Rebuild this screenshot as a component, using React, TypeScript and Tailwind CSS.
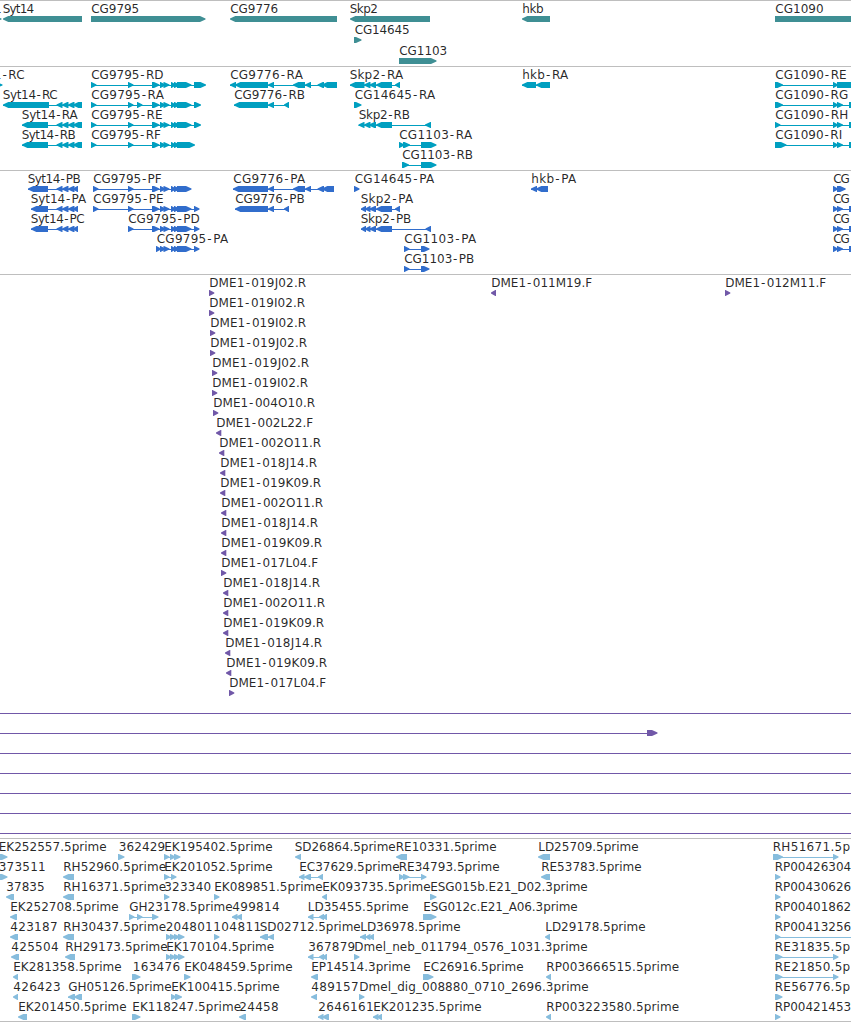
type Dir = "L" | "R" | "B";
type Seg = [number, number];
// row, label, label start, label end, strand, blocks
type Feature = [number, string, number, number, Dir, Seg[]];

const WIDTH = 851;

const s14: Seg[] = [[56.5, 62.5], [62, 68.5], [68, 74.5]];
const cgMid: Seg[] = [[152, 159.5], [160, 165.5], [163.5, 169.5], [171, 176], [174, 180]];
const q9776: Seg[] = [[268, 274], [293, 305], [305, 311], [317.5, 324]];
const four: Seg[] = [[166, 171.5], [170, 176], [174, 180], [178, 184.5]];

const genes: Feature[] = [
  [0, "CG1091", -46.5, 1.5, "R", [[-20, 1.5]]],
  [0, "Syt14", 2.5, 34, "L", [[3, 82]]],
  [0, "CG9795", 91, 139, "R", [[91, 205.5]]],
  [0, "CG9776", 230, 278, "L", [[230, 337]]],
  [0, "Skp2", 349.5, 377.7, "L", [[350, 430]]],
  [1, "CG14645", 354.5, 409.5, "R", [[354, 361.5]]],
  [2, "CG1103", 399, 447, "R", [[399, 436.5]]],
  [0, "hkb", 522, 543.5, "L", [[522, 550]]],
  [0, "CG1090", 775, 823.5, "B", [[775, 860]]],
];

const transcripts: Feature[] = [
  [0, "CG1091-RC", -48, 24.5, "R", [[-10, 2.5]]],
  [1, "Syt14-RC", 2.5, 57.5, "L", [[3, 49], ...s14, [73, 82]]],
  [2, "Syt14-RA", 21.5, 77.5, "L", [[22, 48], ...s14, [73, 82]]],
  [3, "Syt14-RB", 21.5, 75.5, "L", [[22, 48], ...s14, [73, 82]]],
  [0, "CG9795-RD", 91, 163.3, "R", [[91, 96.5], [128, 133.5], ...cgMid, [177, 191.5], [194, 206]]],
  [1, "CG9795-RA", 91, 163.7, "R", [[91, 96.5], [128, 133.5], [137, 142.5], ...cgMid, [177, 191.5], [194, 201]]],
  [2, "CG9795-RE", 91, 162.3, "R", [[91, 96.5], [128, 133.5], ...cgMid, [177, 191.5], [194, 201]]],
  [3, "CG9795-RF", 91, 160.7, "R", [[91, 96.5], [128, 133.5], ...cgMid, [177, 195]]],
  [0, "CG9776-RA", 230, 302.7, "L", [[230, 236], [235, 268], ...q9776, [322, 337]]],
  [1, "CG9776-RB", 234, 304.7, "L", [[234, 268], [268, 274], [284, 289]]],
  [0, "Skp2-RA", 349.5, 403, "L", [[350, 364.5], [364, 370.5], [369.5, 376], [376, 392], [395, 400]]],
  [1, "CG14645-RA", 354.5, 435, "R", [[354, 361.5]]],
  [2, "Skp2-RB", 358.5, 409.7, "L", [[358.5, 364.5], [364, 370.5], [369, 376], [376, 392], [425, 431]]],
  [3, "CG1103-RA", 399, 472, "R", [[399, 404.5], [403, 410], [421, 436.5]]],
  [4, "CG1103-RB", 402, 472.7, "R", [[402, 409], [421, 436.5]]],
  [0, "hkb-RA", 522, 568, "L", [[522, 536], [536, 550]]],
  [0, "CG1090-RE", 775, 846.5, "R", [[775, 783], [833, 838], [837, 860]]],
  [1, "CG1090-RG", 775, 848, "R", [[775, 783], [833, 838], [837, 843], [849, 858]]],
  [2, "CG1090-RH", 775, 848, "R", [[775, 780.5], [833, 838], [837, 843], [849, 858]]],
  [3, "CG1090-RI", 775, 842, "R", [[775, 786.5], [833, 838], [837, 843], [849, 858]]],
];

const proteins: Feature[] = [
  [0, "Syt14-PB", 27.5, 80.5, "L", [[28, 48], ...s14, [73, 78]]],
  [1, "Syt14-PA", 30.5, 86, "L", [[31, 48], ...s14, [73, 78]]],
  [2, "Syt14-PC", 30.5, 84.5, "L", [[31, 48], ...s14, [73, 78]]],
  [0, "CG9795-PF", 93, 161.5, "R", [[93, 98.5], [128, 133.5], ...cgMid, [177, 191.5]]],
  [1, "CG9795-PE", 93, 163.5, "R", [[93, 98.5], [128, 133.5], ...cgMid, [177, 191.5], [194, 199.5]]],
  [2, "CG9795-PD", 128, 199.5, "R", [[128, 133.5], ...cgMid, [177, 191.5], [194, 199.5]]],
  [3, "CG9795-PA", 156.5, 228, "R", [[156, 161], ...cgMid.slice(1), [177, 191.5], [194, 199.5]]],
  [0, "CG9776-PA", 233, 305, "L", [[233, 268], ...q9776, [322, 334]]],
  [1, "CG9776-PB", 235, 304.5, "L", [[235, 268], [268, 274], [284, 289]]],
  [0, "CG14645-PA", 354.5, 434, "R", [[354, 359.5]]],
  [1, "Skp2-PA", 360.5, 413, "L", [[361, 366], [365, 370.5], [369.5, 376], [376, 392], [395, 400]]],
  [2, "Skp2-PB", 360.5, 411, "L", [[361, 366], [365, 370.5], [369.5, 376], [376, 392], [425.5, 431]]],
  [3, "CG1103-PA", 404, 476, "R", [[404, 409.5], [421, 429.5]]],
  [4, "CG1103-PB", 404, 474, "R", [[404, 409.5], [421, 429.5]]],
  [0, "hkb-PA", 531, 576, "L", [[531, 537], [536, 548]]],
  [0, "CG", 833, 849.5, "R", [[833, 838], [837, 845.7]]],
  [1, "CG", 833, 849.5, "R", [[833, 838], [837, 843], [849, 858]]],
  [2, "CG", 833, 849.5, "R", [[833, 838], [837, 843], [849, 858]]],
  [3, "CG", 833, 849.5, "R", [[833, 838], [837, 843], [849, 858]]],
];

const cloneRows: [string, number, number, Dir][] = [
  ["019J02.R", 209, 306, "R"],
  ["019I02.R", 209, 305, "R"],
  ["019I02.R", 210, 306, "R"],
  ["019J02.R", 210, 307, "R"],
  ["019J02.R", 212, 309, "R"],
  ["019I02.R", 212, 308, "R"],
  ["004O10.R", 213, 315, "R"],
  ["002L22.F", 216, 313, "L"],
  ["002O11.R", 219, 321, "L"],
  ["018J14.R", 220, 317, "L"],
  ["019K09.R", 220, 321, "L"],
  ["002O11.R", 221, 323, "L"],
  ["018J14.R", 221, 318, "L"],
  ["019K09.R", 221, 322, "L"],
  ["017L04.F", 221, 318, "R"],
  ["018J14.R", 223, 320, "L"],
  ["002O11.R", 223, 325, "L"],
  ["019K09.R", 223, 324, "L"],
  ["018J14.R", 225, 322, "L"],
  ["019K09.R", 226, 327, "L"],
  ["017L04.F", 229, 326, "R"],
];

const clones: Feature[] = [
  ...cloneRows.map(([n, x, e, d], i): Feature => [i, "DME1-" + n, x, e, d, [[x, x + 5.3]]]),
  [0, "DME1-011M19.F", 491, 592, "L", [[491, 496]]],
  [0, "DME1-012M11.F", 725, 826, "R", [[725, 730.3]]],
  [21, "", 0, 0, "B", [[-9, -8], [860, 861]]],
  [22, "", 0, 0, "R", [[-9, -8], [647, 657.5]]],
  ...[23, 24, 25, 26, 27].map((r): Feature => [r, "", 0, 0, "B", [[-9, -8], [860, 861]]]),
];

const ests: Feature[] = [
  [0, "EK252557.5prime", -1.5, 106.5, "R", [[-3, 7.5]]],
  [0, "362429", 118.5, 165, "R", [[118, 124.5]]],
  [0, "EK195402.5prime", 164, 272.5, "R", [[164, 169.5], [170, 175.5], [174, 180.5]]],
  [0, "SD26864.5prime", 294.5, 395.5, "L", [[295, 301]]],
  [0, "RE10331.5prime", 395.5, 496.5, "L", [[396, 407]]],
  [0, "LD25709.5prime", 538, 638.5, "L", [[538, 550]]],
  [0, "RH51671.5p", 772.5, 850, "R", [[773, 783], [833, 838.5]]],
  [1, "373511", -1.5, 45.5, "R", [[-3, 7.5]]],
  [1, "RH52960.5prime", 63, 166, "L", [[63, 74]]],
  [1, "EK201052.5prime", 164, 272.5, "R", [[164, 169.5], [171, 176.5]]],
  [1, "EC37629.5prime", 299, 399.5, "L", [[299, 304.5], [304, 311], [318, 323]]],
  [1, "RE34793.5prime", 398.5, 499.5, "R", [[399, 404.5], [403, 409.5], [421, 426.5]]],
  [1, "RE53783.5prime", 541, 641.5, "L", [[541, 550]]],
  [1, "RP00426304", 774.5, 851, "R", [[775, 780.5]]],
  [2, "37835", 6, 44.5, "L", [[6, 14]]],
  [2, "RH16371.5prime", 63, 166, "L", [[63, 74]]],
  [2, "323340", 164, 211, "R", [[164, 169.5]]],
  [2, "EK089851.5prime", 214, 322.5, "R", [[214, 219.5]]],
  [2, "EK093735.5prime", 322, 430.5, "L", [[322, 327]]],
  [2, "ESG015b.E21_D02.3prime", 430, 587.5, "R", [[430, 436.5]]],
  [2, "RP00430626", 774.5, 851, "R", [[775, 780.5]]],
  [3, "EK252708.5prime", 10, 118.5, "L", [[10, 17]]],
  [3, "GH23178.5prime", 129, 232.5, "R", [[129, 134.5], [137, 142.5], [152, 158.5]]],
  [3, "499814", 232, 279.5, "L", [[232, 237.5], [236, 242]]],
  [3, "LD35455.5prime", 307.5, 408.5, "L", [[308, 313.5], [319, 324], [322, 327]]],
  [3, "ESG012c.E21_A06.3prime", 423, 577.5, "R", [[423, 436.5]]],
  [3, "RP00401862", 774.5, 851, "R", [[775, 780.5]]],
  [4, "423187", 10, 57.5, "L", [[10, 18]]],
  [4, "RH30437.5prime", 63, 166, "L", [[63, 74]]],
  [4, "204801", 165.5, 212.5, "R", four],
  [4, "104811", 213, 261, "R", [[214, 219.5]]],
  [4, "SD02712.5prime", 259.5, 360.5, "L", [[260, 268], [268, 274]]],
  [4, "LD36978.5prime", 360, 460.5, "L", [[360, 366], [365.5, 370.5], [369, 374]]],
  [4, "LD29178.5prime", 545, 645.5, "L", [[545, 550]]],
  [4, "RP00413256", 774.5, 851, "R", [[775, 780.5], [860, 866]]],
  [5, "425504", 11, 58.5, "L", [[11, 19]]],
  [5, "RH29173.5prime", 65, 167.5, "L", [[65, 75]]],
  [5, "EK170104.5prime", 166, 274, "R", four],
  [5, "367879", 308, 355, "L", [[308, 313.5], [319, 324], [322, 327]]],
  [5, "Dmel_neb_011794_0576_1031.3prime", 354, 587.5, "R", [[354, 359.5]]],
  [5, "RE31835.5p", 774.5, 850, "R", [[775, 782.5], [833, 838.5]]],
  [6, "EK281358.5prime", 13, 121.5, "L", [[13, 18]]],
  [6, "163476", 132.5, 180, "R", [[132, 140.5]]],
  [6, "EK048459.5prime", 184, 292.5, "R", [[184, 190.5]]],
  [6, "EP14514.3prime", 311, 410.5, "L", [[311, 318]]],
  [6, "EC26916.5prime", 423, 523.5, "R", [[423, 433.5]]],
  [6, "RP003666515.5prime", 546, 679, "L", [[546, 551]]],
  [6, "RE21850.5p", 774.5, 850, "R", [[775, 782.5], [833, 838.5]]],
  [7, "426423", 13, 60.5, "L", [[13, 18]]],
  [7, "GH05126.5prime", 68, 171.5, "L", [[68, 75], [74, 82]]],
  [7, "EK100415.5prime", 171, 279.5, "R", [[171, 176.5], [175, 182]]],
  [7, "489157", 311, 358.5, "L", [[311, 317]]],
  [7, "Dmel_dig_008880_0710_2696.3prime", 359, 588.5, "R", [[359, 364.5]]],
  [7, "RE56776.5p", 774.5, 850, "R", [[775, 782.5]]],
  [8, "EK201450.5prime", 18, 126.5, "L", [[18, 27]]],
  [8, "EK118247.5prime", 132, 241, "R", [[132, 140.5]]],
  [8, "24458", 239, 278.5, "L", [[239, 246]]],
  [8, "2646161", 318, 373.5, "L", [[318, 323.5], [322, 329]]],
  [8, "EK201235.5prime", 373, 481.5, "L", [[373, 378.5], [377, 382]]],
  [8, "RP003223580.5prime", 546, 679, "L", [[546, 551]]],
  [8, "RP00421453", 774.5, 851, "R", [[775, 780.5]]],
];

function blockPoints([a, b]: Seg, dir: Dir, y: number) {
  const head = Math.min(b - a, 6);
  const leftHead = Math.min(b - a, 6) - 0.7;
  if (dir === "L") {
    return `${a},${y + 2.4} ${a + leftHead},${y} ${b},${y} ${b},${y + 6} ${a + leftHead},${y + 6} ${a},${y + 3.6}`;
  }
  if (dir === "R") {
    return `${a},${y} ${b - head + 0.5},${y} ${b},${y + 2.6} ${b},${y + 3.4} ${b - head + 0.5},${y + 6} ${a},${y + 6}`;
  }
  return `${a},${y} ${b},${y} ${b},${y + 6} ${a},${y + 6}`;
}

// The hyphen gets extra room on both sides.
function hyphenGaps(label: string) {
  const at = label.indexOf("-");
  if (at < 0) return undefined;
  return Array.from(label, (_, i) => (i === at ? 0.8 : i === at + 1 ? 1.4 : 0)).join(" ");
}

function FeatureGlyph({ feature, step }: { feature: Feature; step: number }) {
  const [row, label, x, end, dir, segs] = feature;
  const base = 12 + row * step;
  const first = segs[0][0];
  const last = segs[segs.length - 1][1];
  return (
    <g>
      {segs.length > 1 && <rect x={first} y={base + 6} width={last - first - 2} height={1} />}
      {segs.map((s, i) => (
        <polygon key={i} points={blockPoints(s, dir, base + 3)} />
      ))}
      {label && (
        <text
          x={x + 0.2}
          y={base}
          dx={hyphenGaps(label)}
          textLength={end - x}
          lengthAdjust="spacing"
          className="fill-black/85"
        >
          {label}
        </text>
      )}
    </g>
  );
}

function Track({ features, step = 20, className }: { features: Feature[]; step?: number; className: string }) {
  return (
    <section className={`w-full overflow-hidden border-t border-[#bebebe] ${className}`}>
      <svg
        width={WIDTH}
        height="100%"
        className="block fill-current font-['DejaVu_Sans',sans-serif] text-[12px]"
      >
        {features.map((f, i) => (
          <FeatureGlyph key={i} feature={f} step={step} />
        ))}
      </svg>
    </section>
  );
}

export default function App() {
  return (
    <main className="flex h-[1022px] w-[851px] flex-col overflow-hidden border-b border-[#bebebe] bg-white">
      <Track features={genes} step={21} className="h-[66px] text-[#3f8f94]" />
      <Track features={transcripts} className="h-[104px] text-[#009fc0]" />
      <Track features={proteins} className="h-[104px] text-[#316dcc]" />
      <Track features={clones} className="h-[564px] text-[#7158a8]" />
      <Track features={ests} className="h-[183px] text-[#87bddd]" />
    </main>
  );
}
